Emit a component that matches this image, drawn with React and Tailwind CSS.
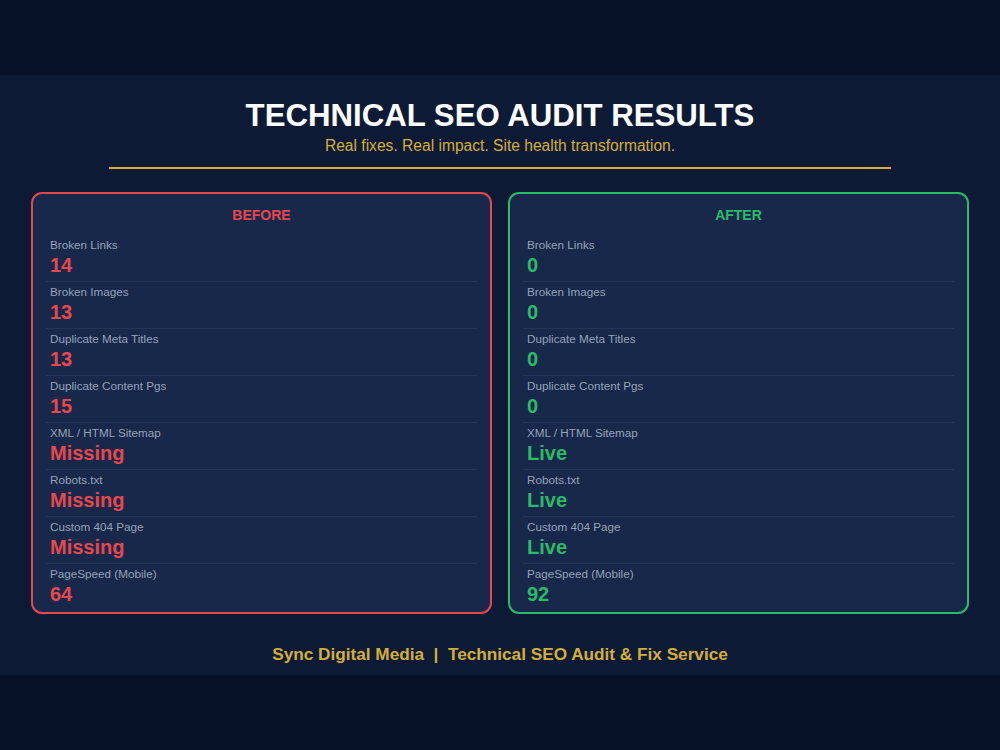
const rows = [
  { label: 'Broken Links', before: '14', after: '0' },
  { label: 'Broken Images', before: '13', after: '0' },
  { label: 'Duplicate Meta Titles', before: '13', after: '0' },
  { label: 'Duplicate Content Pgs', before: '15', after: '0' },
  { label: 'XML / HTML Sitemap', before: 'Missing', after: 'Live' },
  { label: 'Robots.txt', before: 'Missing', after: 'Live' },
  { label: 'Custom 404 Page', before: 'Missing', after: 'Live' },
  { label: 'PageSpeed (Mobile)', before: '64', after: '92' },
];

const Card = ({ title, field, border, text }) => (
  <div className={`flex-1 rounded-[11px] border-2 ${border} bg-[#18284a] px-[13px] pt-[13px] pb-[2px]`}>
    <div className={`text-center text-[14px] leading-[16px] font-bold ${text}`}>{title}</div>
    <div className="mt-[12px]">
      {rows.map((r, i) => (
        <div
          key={r.label}
          className={`px-[4px] pt-[2px] pb-[5px] ${i < rows.length - 1 ? 'border-b border-[#243556]' : ''}`}
        >
          <div className="text-[11.7px] leading-[15px] text-[#94a3b8]">{r.label}</div>
          <div className={`mt-[2px] text-[20px] leading-[22px] font-bold ${text}`}>{r[field]}</div>
        </div>
      ))}
    </div>
  </div>
);

export default function App() {
  return (
    <div
      className="min-h-[750px] bg-[#071128] flex flex-col justify-center"
      style={{ fontFamily: '"Liberation Sans", Arial, sans-serif' }}
    >
      <div className="h-[600px] bg-[#0d1a35] pt-[22px]">
        <h1 className="text-center text-[31.2px] leading-[37px] font-bold text-white">
          TECHNICAL SEO AUDIT RESULTS
        </h1>
        <p className="mt-[3px] text-center text-[15.6px] leading-[18px] text-[#d4af37]">
          Real fixes. Real impact. Site health transformation.
        </p>
        <div className="mx-auto mt-[12px] h-[2px] w-[782px] bg-[#d4af37]" />
        <div className="mt-[23px] flex gap-4 px-[31px]">
          <Card title="BEFORE" field="before" border="border-[#e5484d]" text="text-[#e5484d]" />
          <Card title="AFTER" field="after" border="border-[#2abb67]" text="text-[#2abb67]" />
        </div>
        <p className="mt-[31px] text-center text-[17.2px] leading-[19px] font-bold text-[#d4af37] whitespace-pre">
          {'Sync Digital Media  |  Technical SEO Audit & Fix Service'}
        </p>
      </div>
    </div>
  );
}
